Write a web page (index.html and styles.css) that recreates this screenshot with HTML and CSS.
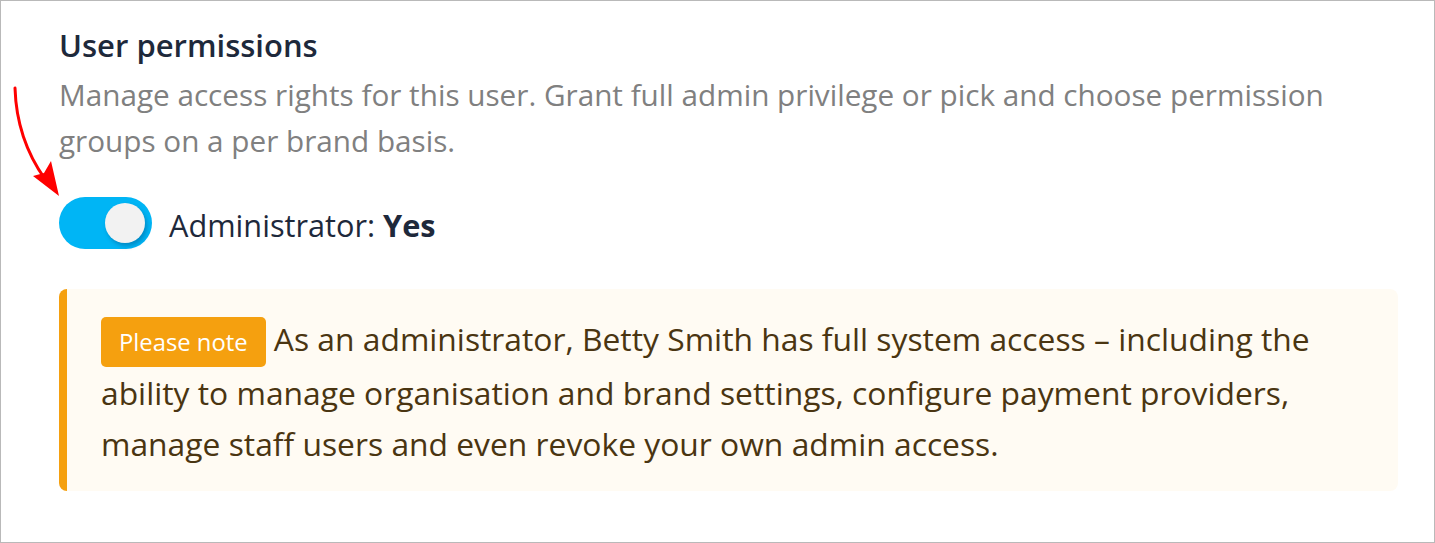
FILE: index.html
```html
<!DOCTYPE html>
<html lang="en">
<head>
    <meta charset="UTF-8">
    <title>User permissions</title>
    <link rel="stylesheet" href="styles.css">
</head>
<body>
    <div class="frame">
        <svg class="pointer" width="70" height="200" viewBox="0 0 70 200">
            <path d="M14 87 C 15 120, 24 150, 44 178" fill="none" stroke="#f00" stroke-width="3" stroke-linecap="round"/>
            <path d="M58 195 L32 175 L43 172 L50 160 Z" fill="#f00"/>
        </svg>

        <section class="permissions">
            <h2>User permissions</h2>
            <p class="lead">Manage access rights for this user. Grant full admin privilege or pick and choose permission groups on a per brand basis.</p>

            <div class="admin-row">
                <span class="switch on"><span class="knob"></span></span>
                <span class="admin-label">Administrator: <strong>Yes</strong></span>
            </div>

            <div class="note">
                <p><span class="badge">Please note</span> As an administrator, Betty Smith has full system access – including the ability to manage organisation and brand settings, configure payment providers, manage staff users and even revoke your own admin access.</p>
            </div>
        </section>
    </div>
</body>
</html>
```

FILE: styles.css
```css
html, body {
    margin: 0;
    padding: 0;
    background: #fff;
}
body {
    font-family: 'Open Sans', 'Noto Sans', sans-serif;
    color: #1e293b;
}
.frame {
    position: relative;
    box-sizing: border-box;
    width: 1435px;
    height: 543px;
    border: 1px solid #b9b9b9;
    padding: 24px 36px 0 58px;
}
.pointer {
    position: absolute;
    left: 0;
    top: 0;
}
h2 {
    margin: 0;
    font-size: 31px;
    font-weight: 600;
    line-height: 40px;
    color: #1e293b;
}
.lead {
    margin: 7px 0 0;
    font-size: 29.7px;
    line-height: 46px;
    color: #808080;
}
.admin-row {
    display: flex;
    align-items: flex-start;
    gap: 17px;
    margin-top: 33px;
}
.switch {
    position: relative;
    display: inline-block;
    flex: none;
    width: 93px;
    height: 52px;
    border-radius: 26px;
    background: #00b5f5;
}
.switch .knob {
    position: absolute;
    top: 6px;
    right: 7px;
    width: 40px;
    height: 40px;
    border-radius: 50%;
    background: #f2f2f2;
    box-shadow: 2px 3px 4px rgba(0, 60, 110, 0.35);
}
.admin-label {
    padding-top: 2px;
    font-size: 30.7px;
    line-height: 52px;
    color: #1e293b;
}
.admin-label strong {
    font-weight: 700;
}
.note {
    margin-top: 38px;
    background: #fffbf3;
    border-left: 8px solid #f5a00f;
    border-radius: 8px;
    padding: 24px 30px 22px 34px;
}
.note p {
    margin: 0;
    font-size: 31.8px;
    line-height: 51px;
    color: #4a3511;
}
.badge {
    display: inline-block;
    padding: 0 18px;
    height: 50px;
    line-height: 50px;
    border-radius: 5px;
    background: #f5a00f;
    color: #fff;
    font-size: 23.8px;
}
```
